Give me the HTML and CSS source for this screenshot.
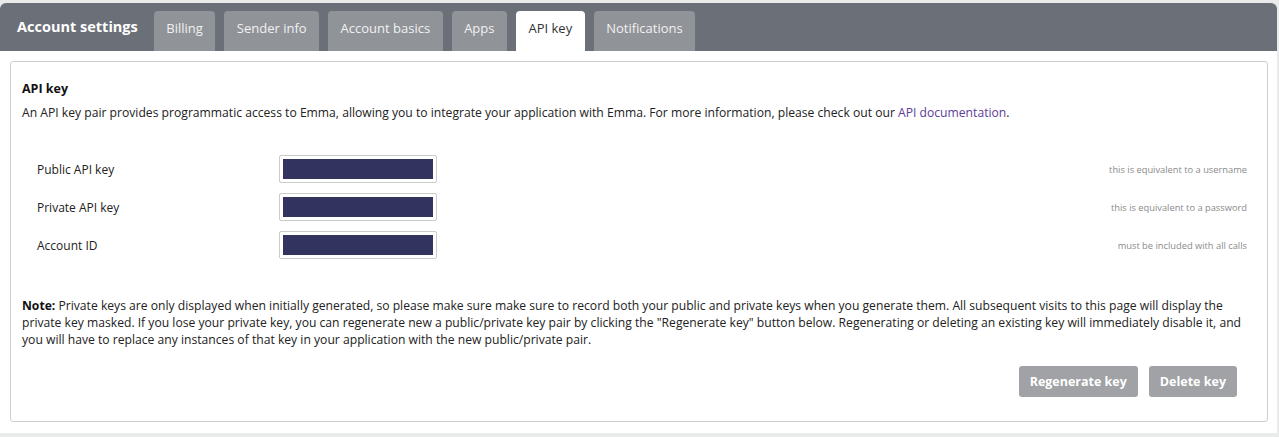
FILE: index.html
```html
<!DOCTYPE html>
<html>
<head>
<meta charset="utf-8">
<link rel="stylesheet" href="styles.css">
</head>
<body>
<div class="page">
  <header class="topbar">
    <h1 class="title">Account settings</h1>
    <nav class="tabs">
      <span class="tab">Billing</span>
      <span class="tab">Sender info</span>
      <span class="tab">Account basics</span>
      <span class="tab">Apps</span>
      <span class="tab active">API key</span>
      <span class="tab">Notifications</span>
    </nav>
  </header>
  <main class="content">
    <section class="card">
      <h2 class="card-title">API key</h2>
      <p class="intro">An API key pair provides programmatic access to Emma, allowing you to integrate your application with Emma. For more information, please check out our <a class="link" href="#">API documentation</a>.</p>
      <div class="rows">
        <div class="row">
          <span class="label">Public API key</span>
          <span class="field"><span class="mask"></span></span>
          <span class="hint">this is equivalent to a username</span>
        </div>
        <div class="row">
          <span class="label">Private API key</span>
          <span class="field"><span class="mask"></span></span>
          <span class="hint">this is equivalent to a password</span>
        </div>
        <div class="row">
          <span class="label">Account ID</span>
          <span class="field"><span class="mask"></span></span>
          <span class="hint">must be included with all calls</span>
        </div>
      </div>
      <p class="note"><b>Note:</b> Private keys are only displayed when initially generated, so please make sure make sure to record both your public and private keys when you generate them. All subsequent visits to this page will display the private key masked. If you lose your private key, you can regenerate new a public/private key pair by clicking the "Regenerate key" button below. Regenerating or deleting an existing key will immediately disable it, and you will have to replace any instances of that key in your application with the new public/private pair.</p>
      <div class="actions">
        <button class="btn">Regenerate key</button>
        <button class="btn">Delete key</button>
      </div>
    </section>
  </main>
</div>
</body>
</html>
```
FILE: styles.css
```css
* { box-sizing: border-box; }
html, body { margin: 0; padding: 0; }
body {
  background: #e9eaea;
  font-family: "Open Sans", "Lato", sans-serif;
  color: #222;
  width: 1279px;
  height: 437px;
  overflow: hidden;
}
.page {
  padding-top: 3px;
  width: 1277px;
}
.topbar {
  background: #6b7078;
  height: 48px;
  border-radius: 6px 6px 0 0;
  display: flex;
  align-items: flex-end;
  padding-left: 17px;
}
.title {
  margin: 0;
  color: #fff;
  font-size: 14.5px;
  font-weight: 700;
  align-self: center;
  margin-right: 16px;
  margin-top: -1px;
}
.tabs {
  display: flex;
  gap: 9px;
}
.tab {
  height: 40px;
  padding: 0 12.5px 6px;
  display: flex;
  align-items: center;
  background: #909398;
  color: #f1f1f1;
  font-size: 13px;
  border-radius: 4px 4px 0 0;
}
.tab.active {
  background: #fff;
  color: #333;
}
.content {
  background: #fff;
  height: 382px;
  padding: 10px 9px 10px 10px;
}
.card {
  border: 1px solid #cfcfcf;
  border-radius: 3px;
  height: 361px;
  padding: 18px 11px 0 11px;
}
.card-title {
  margin: 0;
  font-size: 12.5px;
  font-weight: 700;
  color: #111;
  line-height: 17px;
}
.intro {
  margin: 7px 0 0 0;
  font-size: 12.15px;
  line-height: 17px;
  color: #222;
}
.link {
  color: #5e3c99;
  text-decoration: none;
}
.rows {
  margin-top: 34px;
  display: flex;
  flex-direction: column;
  gap: 10px;
}
.row {
  display: flex;
  align-items: center;
  height: 28px;
  padding-left: 15px;
}
.label {
  width: 242px;
  font-size: 12px;
  color: #222;
}
.field {
  width: 158px;
  height: 28px;
  border: 1px solid #cbcbcb;
  border-radius: 2px;
  padding: 3px;
  display: flex;
}
.mask {
  flex: 1;
  background: #32335f;
}
.hint {
  flex: 1;
  text-align: right;
  font-size: 9.3px;
  color: #8a8a8a;
  padding-right: 9px;
}
.note {
  margin: 38px 0 0 0;
  font-size: 12.15px;
  line-height: 17px;
  color: #222;
}
.note b { color: #111; }
.actions {
  display: flex;
  justify-content: flex-end;
  gap: 11px;
  margin-top: 18px;
  padding-right: 19px;
}
.btn {
  font-family: inherit;
  height: 31px;
  border: none;
  border-radius: 3px;
  background: #a0a2a5;
  color: #fff;
  font-weight: 700;
  font-size: 12.5px;
  padding: 0 11px;
}
```
